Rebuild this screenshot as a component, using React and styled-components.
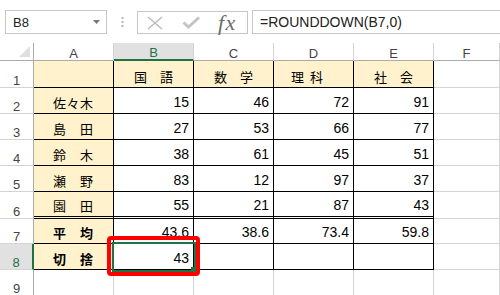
import React from "react";
import styled, { createGlobalStyle } from "styled-components";

const GlobalStyle = createGlobalStyle`
  html, body {
    margin: 0;
    padding: 0;
    background: #fff;
  }
  body {
    width: 500px;
    height: 295px;
    overflow: hidden;
    font-family: "Liberation Sans", Arial, sans-serif;
  }
`;

const columns = ["A", "B", "C", "D", "E", "F"];
const subjects = ["国　語", "数　学", "理 科　", "社　会"];
const rows = [
  { name: "佐々木", scores: [15, 46, 72, 91] },
  { name: "島田", scores: [27, 53, 66, 77] },
  { name: "鈴木", scores: [38, 61, 45, 51] },
  { name: "瀬野", scores: [83, 12, 97, 37] },
  { name: "園田", scores: [55, 21, 87, 43], double: true },
  { name: "平均", scores: ["43.6", "38.6", "73.4", "59.8"], bold: true },
  { name: "切捨", scores: [43, "", "", ""], bold: true, active: true },
];

const App = () => {
  return (
    <Page>
      <GlobalStyle />
      <Bar>
        <NameBox>
          <span>B8</span>
          <svg width="7" height="4" viewBox="0 0 7 4">
            <path d="M0 0h7L3.5 4z" fill="#777" />
          </svg>
        </NameBox>
        <Grip>
          <svg width="3" height="24" viewBox="0 0 3 24">
            <rect x="0.5" y="7" width="2" height="2" fill="#b4b4b4" />
            <rect x="0.5" y="11" width="2" height="2" fill="#b4b4b4" />
            <rect x="0.5" y="15" width="2" height="2" fill="#b4b4b4" />
          </svg>
        </Grip>
        <FxBox>
          <svg width="16" height="14" viewBox="0 0 16 14">
            <path d="M1 1L15 13M15 1L1 13" stroke="#bdbdbd" strokeWidth="1.6" fill="none" />
          </svg>
          <svg width="18" height="13" viewBox="0 0 18 13">
            <path d="M1.5 6.5L6.5 11L17 1.5" stroke="#c4c4c4" strokeWidth="3" fill="none" />
          </svg>
          <Fx>fx</Fx>
        </FxBox>
        <Formula>=ROUNDDOWN(B7,0)</Formula>
      </Bar>

      <Sheet>
        <Corner />
        {columns.map((c) => (
          <ColHead key={c} $active={c === "B"}>
            {c}
          </ColHead>
        ))}

        <RowHead>1</RowHead>
        <Cell $fill $ruled />
        {subjects.map((s) => (
          <Cell key={s} $fill $ruled>
            <Jp>{s}</Jp>
          </Cell>
        ))}
        <Cell />

        {rows.map((r, i) => (
          <React.Fragment key={r.name}>
            <RowHead $active={r.active}>{i + 2}</RowHead>
            <Cell $fill $ruled $spread $bold={r.bold} $double={r.double}>
              {[...r.name].map((ch, k) => (
                <Jp key={k}>{ch}</Jp>
              ))}
            </Cell>
            {r.scores.map((v, k) => (
              <Cell key={k} $ruled $right $double={r.double}>
                {v}
                {r.active && k === 0 && (
                  <>
                    <Selection>
                      <Handle />
                    </Selection>
                    <Callout />
                  </>
                )}
              </Cell>
            ))}
            <Cell />
          </React.Fragment>
        ))}

        <RowHead>9</RowHead>
        {columns.map((c) => (
          <Cell key={c} />
        ))}
      </Sheet>
    </Page>
  );
};

export default App;

const Page = styled.div`
  width: 500px;
  height: 295px;
  overflow: hidden;
  background: #fff;
`;

const Bar = styled.div`
  box-sizing: border-box;
  height: 43px;
  display: flex;
  align-items: flex-start;
  padding: 10px 0 0 5px;
`;

const NameBox = styled.div`
  box-sizing: border-box;
  width: 102px;
  height: 24px;
  border: 1px solid #c6c6c6;
  display: flex;
  align-items: center;
  justify-content: space-between;
  padding: 0 6px 0 7px;
  font-size: 13px;
  color: #222;
`;

const Grip = styled.div`
  width: 30px;
  height: 24px;
  display: flex;
  justify-content: center;
`;

const FxBox = styled.div`
  box-sizing: border-box;
  width: 111px;
  height: 23px;
  margin-top: 1px;
  border: 1px solid #c6c6c6;
  display: flex;
  align-items: center;
  gap: 19px;
  padding-left: 9px;
`;

const Fx = styled.span`
  margin-left: -1px;
  font-family: "Liberation Serif", "Times New Roman", serif;
  font-style: italic;
  font-size: 22px;
  line-height: 22px;
  letter-spacing: 1.5px;
  color: #6b6b6b;
`;

const Formula = styled.div`
  box-sizing: border-box;
  flex: 1;
  height: 24px;
  margin-left: 4px;
  border: 1px solid #c6c6c6;
  border-right: none;
  display: flex;
  align-items: center;
  padding-left: 7px;
  font-size: 14px;
  color: #222;
`;

const Sheet = styled.div`
  display: grid;
  grid-template-columns: 34px repeat(5, 80px) 1fr;
  grid-template-rows: 18px 27px repeat(4, 26px) 27px 25px 26px 26px;
`;

const Corner = styled.div`
  box-sizing: border-box;
  position: relative;
  border-right: 1px solid #ababab;
  border-bottom: 1px solid #ababab;
  &::after {
    content: "";
    position: absolute;
    right: 3px;
    bottom: 3px;
    border-left: 11px solid transparent;
    border-bottom: 11px solid #dfdfdf;
  }
`;

const ColHead = styled.div`
  box-sizing: border-box;
  display: flex;
  justify-content: center;
  align-items: flex-end;
  font-size: 13px;
  line-height: 13px;
  color: ${(p) => (p.$active ? "#217346" : "#444")};
  background: ${(p) => (p.$active ? "#e1e1e1" : "#fff")};
  border-right: 1px solid #d4d4d4;
  border-bottom: ${(p) => (p.$active ? "2px solid #217346" : "1px solid #ababab")};
`;

const RowHead = styled.div`
  box-sizing: border-box;
  display: flex;
  justify-content: center;
  align-items: flex-end;
  font-size: 13px;
  line-height: 13px;
  color: ${(p) => (p.$active ? "#217346" : "#444")};
  background: ${(p) => (p.$active ? "#e1e1e1" : "#fff")};
  border-right: ${(p) => (p.$active ? "2px solid #217346" : "1px solid #ababab")};
  border-bottom: 1px solid #d4d4d4;
`;

const Cell = styled.div`
  box-sizing: border-box;
  position: relative;
  display: flex;
  align-items: flex-end;
  justify-content: ${(p) =>
    p.$right ? "flex-end" : p.$spread ? "space-between" : "center"};
  padding: ${(p) => (p.$spread ? "0 20px 4px 19px" : "0 4px 4px 4px")};
  background: ${(p) => (p.$fill ? "#fff2cc" : "#fff")};
  border-right: 1px solid ${(p) => (p.$ruled ? "#000" : "#d4d4d4")};
  border-bottom: ${(p) =>
    p.$double ? "3px double #000" : `1px solid ${p.$ruled ? "#000" : "#d4d4d4"}`};
  font-size: 14px;
  line-height: 14px;
  font-weight: ${(p) => (p.$bold ? 700 : 400)};
  color: #000;
`;

const Jp = styled.span`
  font-family: "Noto Sans CJK JP", "Liberation Sans", sans-serif;
  font-size: 13px;
  line-height: 13px;
  white-space: pre;
  word-spacing: 3px;
`;

const Selection = styled.div`
  position: absolute;
  left: -2px;
  top: -2px;
  width: 84px;
  height: 30px;
  box-sizing: border-box;
  border: 2px solid #217346;
  z-index: 2;
`;

const Handle = styled.div`
  position: absolute;
  right: -3px;
  bottom: -3px;
  width: 6px;
  height: 6px;
  background: #217346;
`;

const Callout = styled.div`
  position: absolute;
  left: -7px;
  top: -8px;
  width: 93px;
  height: 40px;
  box-sizing: border-box;
  border: 4px solid #ff0000;
  border-radius: 4px;
  z-index: 3;
`;
